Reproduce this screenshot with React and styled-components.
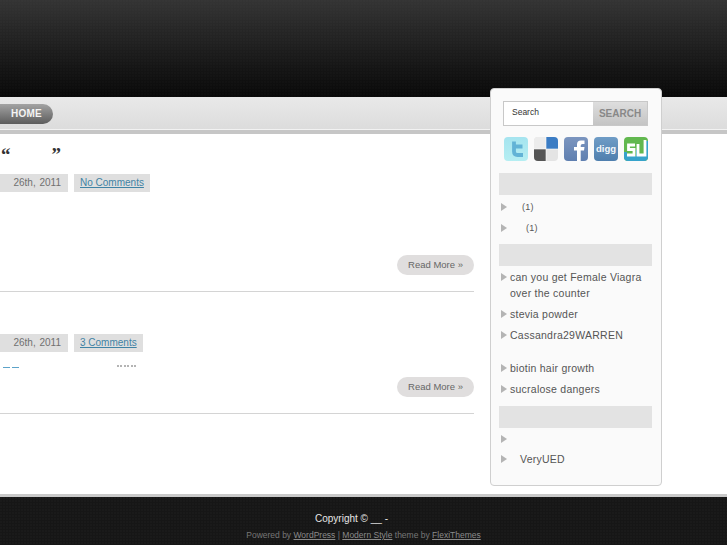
import React from 'react';
import styled, { createGlobalStyle } from 'styled-components';

const GlobalStyle = createGlobalStyle`
    html, body {
        margin: 0;
        padding: 0;
        background: #fff;
        font-family: "Liberation Sans", Arial, sans-serif;
    }
    a {
        text-decoration: none;
    }
`;

const Page = styled.div`
    width: 727px;
    height: 545px;
    overflow: hidden;
    display: flex;
    flex-direction: column;
`;

const Header = styled.header`
    height: 97px;
    flex: none;
    background:
        radial-gradient(circle at 1px 1px, rgba(255,255,255,0.012) 1px, transparent 1px) 0 0 / 3px 3px,
        linear-gradient(#343434 0, #262626 30px, #141414 70px, #090909 97px);
`;

const Nav = styled.nav`
    height: 37px;
    flex: none;
    box-sizing: border-box;
    padding-top: 7px;
    background: linear-gradient(#e9e9e9, #dcdcdc 32px, #f2f2f2 32px, #f2f2f2 33px, #c6c6c6 33px);
`;

const HomeTab = styled.a`
    display: block;
    width: 53px;
    height: 20px;
    border-radius: 0 10px 10px 0;
    background: linear-gradient(#a3a3a3, #5c5c5c);
    color: #f4f4f4;
    font-size: 10px;
    font-weight: bold;
    letter-spacing: 0.3px;
    line-height: 20px;
    text-align: center;
    box-sizing: border-box;
`;

const Main = styled.main`
    height: 360px;
    flex: none;
    display: flex;
    align-items: flex-start;
`;

const Posts = styled.div`
    width: 474px;
    flex: none;
`;

const Post = styled.article`
    height: ${(p) => p.$height}px;
    box-sizing: border-box;
    border-bottom: 1px solid #d4d4d4;
    padding-top: ${(p) => p.$top}px;
`;

const Title = styled.h2`
    margin: 0;
    height: 40px;
    padding-left: 1px;
    font-family: "Liberation Serif", serif;
    font-size: 19px;
    font-weight: bold;
    color: #333;
    line-height: 42px;
    span {
        display: inline-block;
        width: 41px;
    }
`;

const Meta = styled.div`
    display: flex;
    gap: 6px;
    height: 18px;
`;

const DateTag = styled.span`
    width: 68px;
    box-sizing: border-box;
    padding-right: 7px;
    text-align: right;
    background: #dfdfdf;
    color: #707070;
    font-size: 10px;
    word-spacing: 1px;
    line-height: 18px;
`;

const CommentTag = styled.a`
    padding: 0 6px;
    background: #dfdfdf;
    color: #3f83a5;
    font-size: 10px;
    line-height: 18px;
    text-decoration: underline;
`;

const Excerpt = styled.div`
    display: flex;
    height: 25px;
    align-items: flex-start;
    padding: 7px 0 0 3px;
    box-sizing: border-box;
`;

const DashLink = styled.span`
    width: 16px;
    height: 1px;
    margin-top: 8px;
    background: repeating-linear-gradient(90deg, #5da3c9 0 7px, transparent 7px 9px);
`;

const Dots = styled.span`
    margin-left: 98px;
    width: 20px;
    height: 2px;
    margin-top: 6px;
    background: repeating-linear-gradient(90deg, #b4b4b4 0 2px, transparent 2px 3.4px);
`;

const MoreRow = styled.div`
    display: flex;
    justify-content: flex-end;
    margin-top: ${(p) => p.$gap}px;
`;

const ReadMore = styled.a`
    width: 77px;
    height: 20px;
    border-radius: 10px;
    background: #e0dede;
    color: #666;
    font-size: 9.5px;
    line-height: 20px;
    text-align: center;
`;

const Sidebar = styled.aside`
    width: 172px;
    height: 398px;
    flex: none;
    box-sizing: border-box;
    margin: -46px 0 0 16px;
    position: relative;
    padding: 12px 8px 0;
    background: #fafafa;
    border: 1px solid #cfcfcf;
    border-radius: 4px;
`;

const SearchForm = styled.form`
    display: flex;
    height: 25px;
    width: 145px;
    margin: 0 0 0 4px;
    box-sizing: border-box;
    border: 1px solid #c8c8c8;
`;

const SearchInput = styled.div`
    width: 89px;
    box-sizing: border-box;
    padding-left: 8px;
    background: #fff;
    color: #333;
    font-size: 8.5px;
    line-height: 21px;
`;

const SearchButton = styled.div`
    flex: 1;
    background: linear-gradient(#dedede, #c4c4c4);
    color: #888;
    font-size: 10px;
    font-weight: bold;
    line-height: 23px;
    text-align: center;
`;

const Social = styled.div`
    display: flex;
    gap: 6px;
    margin: 11px 0 13px 5px;
    height: 23px;
`;

const Tile = styled.svg`
    width: 24px;
    height: 24px;
    flex: none;
    display: block;
`;

const WidgetTitle = styled.div`
    width: 153px;
    height: 22px;
    background: #e3e3e3;
`;

const List = styled.ul`
    list-style: none;
    margin: 0;
    padding: ${(p) => p.$top}px 0 ${(p) => p.$bottom}px 2px;
`;

const Item = styled.li`
    position: relative;
    padding-left: ${(p) => p.$indent || 9}px;
    margin-bottom: 5px;
    min-height: ${(p) => p.$min || 16}px;
    color: #555;
    font-size: ${(p) => p.$size || 10.5}px;
    letter-spacing: 0.25px;
    line-height: 16px;
    &::before {
        content: '';
        position: absolute;
        left: 0;
        top: 4px;
        border-left: 6px solid #b4b4b4;
        border-top: 4px solid transparent;
        border-bottom: 4px solid transparent;
    }
`;

const Footer = styled.footer`
    flex: 1;
    box-sizing: border-box;
    border-top: 3px solid #c9c9c9;
    padding-top: 15px;
    background:
        radial-gradient(circle at 1px 1px, rgba(255,255,255,0.015) 1px, transparent 1px) 0 0 / 3px 3px,
        #161616;
    text-align: center;
`;

const Copyright = styled.div`
    color: #e6e6e6;
    font-size: 10px;
    line-height: 14px;
    padding-right: 24px;
`;

const Powered = styled.div`
    margin-top: 3px;
    color: #777;
    font-size: 8.5px;
    line-height: 13px;
    a {
        color: #8a8a8a;
        text-decoration: underline;
    }
`;

function TileBase({ id, from, to, children }) {
    return (
        <Tile viewBox="0 0 24 24">
            <defs>
                <linearGradient id={id} x1="0" y1="0" x2="0" y2="1">
                    <stop offset="0" stopColor={from} />
                    <stop offset="1" stopColor={to} />
                </linearGradient>
            </defs>
            <rect width="24" height="24" rx="4" fill={`url(#${id})`} />
            {children}
        </Tile>
    );
}

function SocialIcons() {
    return (
        <Social>
            <TileBase id="tw" from="#a5e4ef" to="#b5eef2">
                <path d="M10 4.500v10q0 3.500 3.500 3.500h5.500M10 9.500h8.500" fill="none" stroke="#62b3d6" strokeWidth="3.800" />
            </TileBase>
            <Tile viewBox="0 0 24 24">
                <rect width="24" height="24" rx="4" fill="#e4e4e4" />
                <path d="M12 0h8a4 4 0 0 1 4 4v8H12z" fill="#3b7cc4" />
                <path d="M0 12h12v12H4a4 4 0 0 1-4-4z" fill="#555" />
                <path d="M0 4a4 4 0 0 1 4-4h8v12H0z" fill="#ececec" />
                <path d="M0 12h24M12 0v24" stroke="#fff" strokeWidth="0.600" />
            </Tile>
            <TileBase id="fb" from="#7b95bf" to="#5f7fb0">
                <path d="M13 24V13.500h-3V10h3V7.500q0-4 4-4h3.500V7h-2q-1.800 0-1.800 1.800V10h3.800l-.5 3.500h-3.300V24z" fill="#fff" />
            </TileBase>
            <TileBase id="dg" from="#6f9cc6" to="#4f7fae">
                <text x="12" y="14.500" textAnchor="middle" fill="#f4f8fb" fontSize="9.500" fontWeight="bold" fontFamily="Liberation Sans">digg</text>
            </TileBase>
            <Tile viewBox="0 0 24 24">
                <rect width="24" height="24" rx="4" fill="#62b84f" />
                <path d="M0 15h3v4h9v-6h2v6h7V4h3v16a4 4 0 0 1-4 4H4a4 4 0 0 1-4-4z" fill="#36a3cb" />
                <path d="M11 8H4.500v4.500H10V18H3M14 7v11h7V3" fill="none" stroke="#fff" strokeWidth="2.800" />
            </Tile>
        </Social>
    );
}

export default function App() {
    return (
        <Page>
            <GlobalStyle />
            <Header />
            <Nav>
                <HomeTab href="#">HOME</HomeTab>
            </Nav>
            <Main>
                <Posts>
                    <Post $height={158} $top={0}>
                        <Title>“<span />”</Title>
                        <Meta>
                            <DateTag>26th, 2011</DateTag>
                            <CommentTag href="#">No Comments</CommentTag>
                        </Meta>
                        <MoreRow $gap={63}>
                            <ReadMore href="#">Read More »</ReadMore>
                        </MoreRow>
                    </Post>
                    <Post $height={122} $top={42}>
                        <Meta>
                            <DateTag>26th, 2011</DateTag>
                            <CommentTag href="#">3 Comments</CommentTag>
                        </Meta>
                        <Excerpt>
                            <DashLink />
                            <Dots />
                        </Excerpt>
                        <MoreRow $gap={0}>
                            <ReadMore href="#">Read More »</ReadMore>
                        </MoreRow>
                    </Post>
                </Posts>
                <Sidebar>
                    <SearchForm>
                        <SearchInput>Search</SearchInput>
                        <SearchButton>SEARCH</SearchButton>
                    </SearchForm>
                    <SocialIcons />
                    <WidgetTitle />
                    <List $top={4} $bottom={3}>
                        <Item $size={9} $indent={21}>(1)</Item>
                        <Item $size={9} $indent={25}>(1)</Item>
                    </List>
                    <WidgetTitle />
                    <List $top={3} $bottom={4}>
                        <Item>can you get Female Viagra<br />over the counter</Item>
                        <Item>stevia powder</Item>
                        <Item $min={28}>Cassandra29WARREN</Item>
                        <Item>biotin hair growth</Item>
                        <Item>sucralose dangers</Item>
                    </List>
                    <WidgetTitle />
                    <List $top={3} $bottom={0}>
                        <Item $min={15} />
                        <Item $indent={19}>VeryUED</Item>
                    </List>
                </Sidebar>
            </Main>
            <Footer>
                <Copyright>Copyright © __ -</Copyright>
                <Powered>
                    Powered by <a href="#">WordPress</a> | <a href="#">Modern Style</a> theme by <a href="#">FlexiThemes</a>
                </Powered>
            </Footer>
        </Page>
    );
}
